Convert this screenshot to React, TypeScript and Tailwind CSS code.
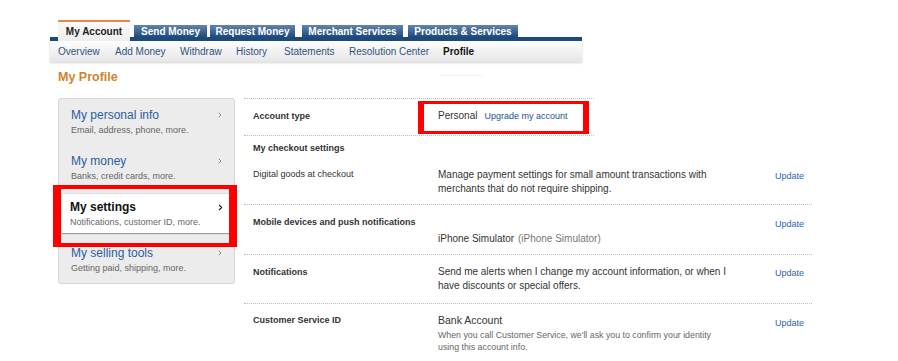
import { ChevronRight } from "lucide-react";

const tabs = [
  { label: "Send Money", w: "w-[73px]", ml: "ml-[4px]" },
  { label: "Request Money", w: "w-[85px]", ml: "ml-[3px]" },
  { label: "Merchant Services", w: "w-[101px]", ml: "ml-[7px]" },
  { label: "Products & Services", w: "w-[110px]", ml: "ml-[5px]" },
];

const subnav = [
  { label: "Overview", w: "w-[57px]" },
  { label: "Add Money", w: "w-[65px]" },
  { label: "Withdraw", w: "w-[56px]" },
  { label: "History", w: "w-[48px]" },
  { label: "Statements", w: "w-[65px]" },
  { label: "Resolution Center", w: "w-[94px]" },
];

const sideItems = [
  { title: "My personal info", sub: "Email, address, phone, more." },
  { title: "My money", sub: "Banks, credit cards, more." },
  { title: "My settings", sub: "Notifications, customer ID, more.", active: true },
  { title: "My selling tools", sub: "Getting paid, shipping, more." },
];

function UpdateLink({ className }: { className: string }) {
  return (
    <div className={`pl-[1px] text-[9px] leading-[12px] text-[#2d62b0] ${className}`}>Update</div>
  );
}

export default function App() {
  return (
    <div className="w-[898px] h-[361px] overflow-hidden bg-white font-['Liberation_Sans',Arial,sans-serif] text-[#333]">
      <div className="pl-[50px] pt-[20px]">
        {/* top tabs */}
        <div className="w-[532px]">
          <div className="flex items-end h-[21px] border-b-[4px] border-[#1d4a7c] pl-[8px]">
            <div className="relative z-10 -mb-[4px] w-[72px] h-[21px] border-t-2 border-[#e8874c] bg-gradient-to-b from-[#fafafa] to-[#eeeeee] text-center text-[10px] font-bold leading-[12px] pt-[4px] text-[#222]">
              My Account
            </div>
            {tabs.map((t) => (
              <div
                key={t.label}
                className={`${t.w} ${t.ml} h-[12px] bg-gradient-to-b from-[#6285ad] to-[#1f4b7d] text-center text-[10px] font-bold leading-[13px] text-white`}
              >
                {t.label}
              </div>
            ))}
          </div>
          <div className="flex items-center h-[21px] pl-[8px] bg-gradient-to-b from-[#fdfdfd] to-[#e6e6e6] shadow-[0_1px_2px_rgba(0,0,0,0.18)] text-[10px]">
            {subnav.map((s) => (
              <span key={s.label} className={`${s.w} text-[#2f5382]`}>
                {s.label}
              </span>
            ))}
            <span className="font-bold text-[#111]">Profile</span>
          </div>
        </div>

        {/* page title */}
        <div className="flex h-[36px] pt-[8px]">
          <h1 className="pl-[8px] text-[12.5px] font-bold leading-[15px] text-[#d4822e]">My Profile</h1>
          <div className="ml-[322px] mt-[5px] h-px w-[43px] bg-[#f2f2f2]" />
        </div>

        <div className="flex items-start">
          {/* sidebar */}
          <div className="ml-[8px] w-[177px] rounded-[3px] border border-[#d6d6d6] bg-[#ececec]">
            {sideItems.map((it) =>
              it.active ? (
                <div key={it.title} className="relative h-[46px] pt-[1px]">
                  <div className="mx-[3px] mt-[1px] h-[40px] border-t border-[#dcdcdc] bg-white pl-[8px] pt-[6px] shadow-[0_1px_1px_rgba(0,0,0,0.35)]">
                    <div className="flex items-center justify-between pr-[6px]">
                      <span className="text-[12px] font-bold leading-[14px] text-[#111]">{it.title}</span>
                      <ChevronRight size={9} strokeWidth={3} className="text-[#222]" />
                    </div>
                    <div className="mt-[2px] text-[9px] leading-[12px] text-[#666]">{it.sub}</div>
                  </div>
                  <div className="absolute left-[-6px] top-[-6px] h-[62px] w-[184px] border-x-[8px] border-y-[4px] border-[#ff0000]" />
                </div>
              ) : (
                <div key={it.title} className="h-[46px] pl-[12px] pt-[9px] pr-[10px]">
                  <div className="flex items-center justify-between">
                    <span className="text-[12px] leading-[14px] text-[#2a5ca6]">{it.title}</span>
                    <ChevronRight size={8} strokeWidth={3} className="text-[#8a8a8a]" />
                  </div>
                  <div className="mt-[2px] text-[9px] leading-[12px] text-[#666]">{it.sub}</div>
                </div>
              )
            )}
          </div>

          {/* content */}
          <div className="ml-[9px] w-[568px]">
            <div className="relative flex h-[38px] w-[350px] border-y border-dotted border-[#bdbdbd] pt-[11px]">
              <div className="w-[194px] pl-[9px] text-[9px] font-bold leading-[12px]">Account type</div>
              <div className="flex items-baseline text-[10px] leading-[12px]">
                <span>Personal</span>
                <span className="ml-[7px] text-[9px] text-[#284f8f]">Upgrade my account</span>
              </div>
              <div className="absolute left-[174px] top-[2px] h-[33px] w-[171px] border-x-[6px] border-y-[3px] border-[#ff0000]" />
            </div>

            <div className="h-[69px] border-b border-dotted border-[#bdbdbd] pt-[6px]">
              <div className="pl-[9px] text-[9px] font-bold leading-[12px]">My checkout settings</div>
              <div className="mt-[14px] flex">
                <div className="w-[194px] pl-[9px] text-[9px] leading-[12px]">Digital goods at checkout</div>
                <div className="w-[336px] text-[10px] leading-[13.5px]">
                  Manage payment settings for small amount transactions with
                  <br />
                  merchants that do not require shipping.
                </div>
                <UpdateLink className="mt-[2px]" />
              </div>
            </div>

            <div className="h-[50px] border-b border-dotted border-[#bdbdbd] pt-[11px]">
              <div className="flex">
                <div className="w-[530px] pl-[9px] text-[9px] font-bold leading-[12px]">
                  Mobile devices and push notifications
                </div>
                <UpdateLink className="mt-[2px]" />
              </div>
              <div className="ml-[194px] mt-[3px] text-[10px] leading-[12px]">
                iPhone Simulator <span className="ml-[1px] text-[#777]">(iPhone Simulator)</span>
              </div>
            </div>

            <div className="flex h-[49px] border-b border-dotted border-[#bdbdbd]">
              <div className="w-[194px] pl-[9px] pt-[11px] text-[9px] font-bold leading-[12px]">Notifications</div>
              <div className="w-[336px] pt-[10px] text-[10px] leading-[14px]">
                Send me alerts when I change my account information, or when I
                <br />
                have discounts or special offers.
              </div>
              <UpdateLink className="pt-[12px]" />
            </div>

            <div className="flex h-[60px]">
              <div className="w-[194px] pl-[9px] pt-[10px] text-[9px] font-bold leading-[12px]">Customer Service ID</div>
              <div className="w-[336px] pt-[9px]">
                <div className="text-[10.5px] leading-[14px]">Bank Account</div>
                <div className="mt-[2px] text-[8.8px] leading-[12px] text-[#666]">
                  When you call Customer Service, we'll ask you to confirm your identity
                  <br />
                  using this account info.
                </div>
              </div>
              <UpdateLink className="pt-[13px]" />
            </div>
          </div>
        </div>
      </div>
    </div>
  );
}
